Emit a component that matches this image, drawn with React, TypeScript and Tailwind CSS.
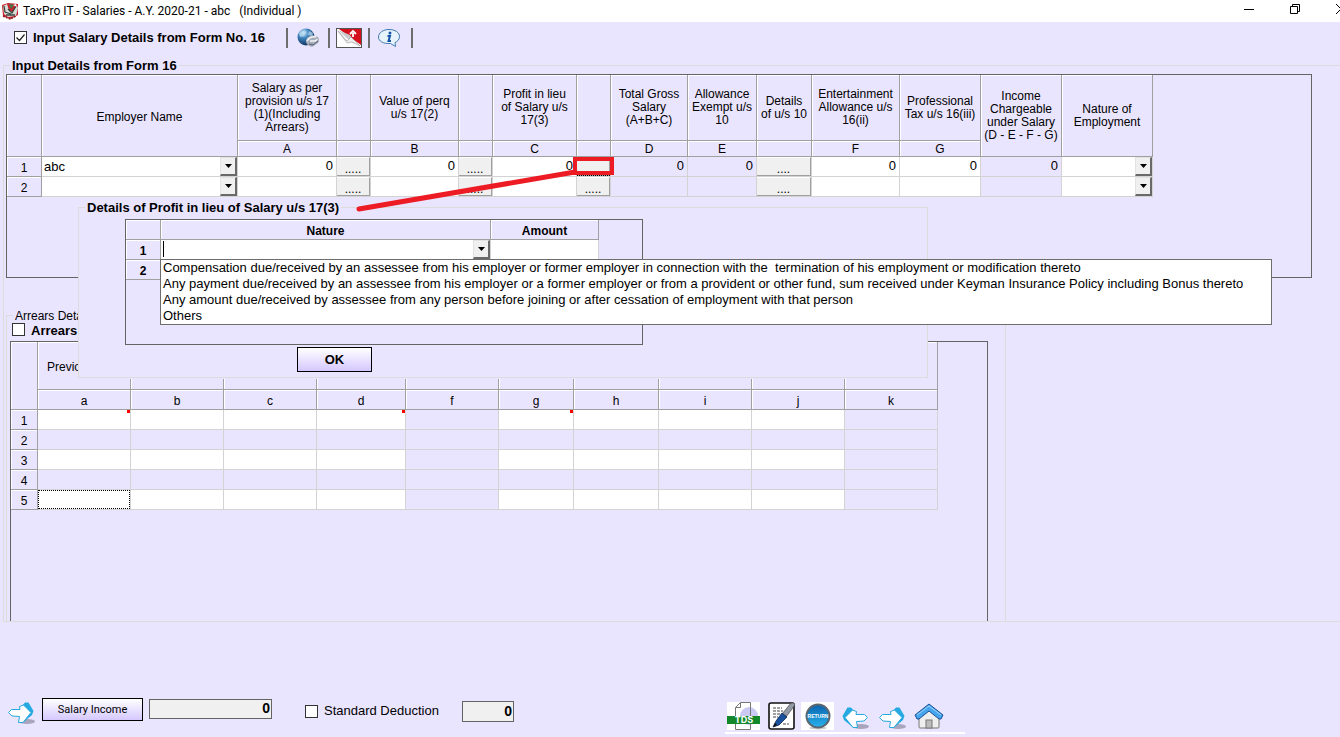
import React from "react";

const SANS = "font-['Liberation_Sans',Arial,sans-serif]";
const UI = "font-['Roboto','Liberation_Sans',sans-serif]";
const WIDE = "font-['Inter','Liberation_Sans',sans-serif]";

const headCell = "relative border-r border-b border-[#a0a0a0] p-0 font-normal text-[12px] leading-[13px] text-center shadow-[inset_1px_1px_0_#fff]";

interface Column {
  width: string;
  title?: string[];
  letter?: string;
  kind: "combo" | "text" | "locked" | "button";
  label: string;
  tall?: boolean;
  first?: string;
}

const salaryColumns: Column[] = [
  { width: "w-[196px]", title: ["Employer Name"], kind: "combo", label: "Employer Name", tall: true, first: "abc" },
  { width: "w-[99px]", title: ["Salary as per", "provision u/s 17", "(1)(Including", "Arrears)"], letter: "A", kind: "text", label: "Salary", first: "0" },
  { width: "w-[34px]", kind: "button", label: "Salary details", first: "....." },
  { width: "w-[88px]", title: ["Value of perq", "u/s 17(2)"], letter: "B", kind: "text", label: "Value of perq", first: "0" },
  { width: "w-[34px]", kind: "button", label: "Perquisite details", first: "....." },
  { width: "w-[84px]", title: ["Profit in lieu", "of Salary u/s", "17(3)"], letter: "C", kind: "text", label: "Profit in lieu", first: "0" },
  { width: "w-[34px]", kind: "button", label: "Profit in lieu details", first: "....." },
  { width: "w-[77px]", title: ["Total Gross", "Salary", "(A+B+C)"], letter: "D", kind: "locked", label: "Total Gross Salary", first: "0" },
  { width: "w-[69px]", title: ["Allowance", "Exempt u/s", "10"], letter: "E", kind: "locked", label: "Allowance Exempt", first: "0" },
  { width: "w-[55px]", title: ["Details", "of u/s 10"], kind: "button", label: "Details of u/s 10", first: "...." },
  { width: "w-[88px]", title: ["Entertainment", "Allowance u/s", "16(ii)"], letter: "F", kind: "text", label: "Entertainment Allowance", first: "0" },
  { width: "w-[81px]", title: ["Professional", "Tax u/s 16(iii)"], letter: "G", kind: "text", label: "Professional Tax", first: "0" },
  { width: "w-[81px]", title: ["Income", "Chargeable", "under Salary", "(D - E - F - G)"], kind: "locked", label: "Income Chargeable", tall: true, first: "0" },
  { width: "w-[91px]", title: ["Nature of", "Employment"], kind: "combo", label: "Nature of Employment", tall: true, first: "" },
];

const arrearColumns = [
  { letter: "a", width: "w-[93px]", marked: true },
  { letter: "b", width: "w-[93px]" },
  { letter: "c", width: "w-[93px]" },
  { letter: "d", width: "w-[89px]", marked: true },
  { letter: "f", width: "w-[93px]", locked: true },
  { letter: "g", width: "w-[75px]", marked: true },
  { letter: "h", width: "w-[85px]" },
  { letter: "i", width: "w-[93px]" },
  { letter: "j", width: "w-[93px]" },
  { letter: "k", width: "w-[93px]", locked: true },
];

const natures = [
  "Compensation due/received by an assessee from his employer or former employer in connection with the \u00a0termination of his employment or modification thereto",
  "Any payment due/received by an assessee from his employer or a former employer or from a provident or other fund, sum received under Keyman Insurance Policy including Bonus thereto",
  "Any amount due/received by assessee from any person before joining or after cessation of employment with that person",
  "Others",
];

function Lines({ text }: { text: string[] }) {
  return (
    <>
      {text.map((t) => (
        <span key={t} className="block whitespace-nowrap">{t}</span>
      ))}
    </>
  );
}

function Combo({ label, value }: { label: string; value?: string }) {
  return (
    <div className="relative h-[19px]">
      <select aria-label={label} className="block h-[19px] w-full appearance-none bg-white pl-[2px] text-[13px] leading-[19px] outline-none">
        <option>{value}</option>
      </select>
      <span className="pointer-events-none absolute top-0 right-0 flex h-[19px] w-[17px] items-center justify-center border-t border-l border-r-2 border-b-2 border-t-[#e3e3e3] border-l-[#e3e3e3] border-r-[#696969] border-b-[#696969] bg-[#f0f0f0]">
        <svg width="7" height="4" viewBox="0 0 7 4"><path d="M0 0h7L3.500 4z" /></svg>
      </span>
    </div>
  );
}

function Tick({ id, checked }: { id: string; checked?: boolean }) {
  return (
    <span className="relative block size-[13px] shrink-0">
      <input id={id} type="checkbox" defaultChecked={checked} className="peer block size-[13px] appearance-none border border-[#333] bg-white" />
      <svg className="pointer-events-none absolute inset-0 hidden peer-checked:block" width="13" height="13" viewBox="0 0 13 13">
        <path d="M2.500 6.500l3 3 5-6" fill="none" stroke="#222" strokeWidth="1.200" />
      </svg>
    </span>
  );
}

function SalaryGrid() {
  return (
    <table className="table-fixed border-separate border-spacing-0 w-[1146px]">
      <colgroup>
        <col className="w-[35px]" />
        {salaryColumns.map((c) => <col key={c.label} className={c.width} />)}
      </colgroup>
      <thead>
        <tr className="h-[66px]">
          <th rowSpan={2} className={headCell} />
          {salaryColumns.map((c) => (
            <th key={c.label} rowSpan={c.tall ? 2 : 1} className={`${headCell} ${c.title?.length === 1 ? "pt-1" : ""}`}>
              {c.title && <Lines text={c.title} />}
            </th>
          ))}
        </tr>
        <tr className="h-[16px]">
          {salaryColumns.filter((c) => !c.tall).map((c) => (
            <th key={c.label} className={`${headCell} pt-[2px]`}>{c.letter}</th>
          ))}
        </tr>
      </thead>
      <tbody>
        {[1, 2].map((n) => (
          <tr key={n} className="h-[20px]">
            <th className={`${headCell} pt-1`}>{n}</th>
            {salaryColumns.map((c) => (
              <td key={c.label} className={`border-r border-b border-[#d3d3d3] p-0 ${c.kind === "locked" ? "" : "bg-white"}`}>
                {c.kind === "combo" && <Combo label={`${c.label} ${n}`} value={n === 1 ? c.first : ""} />}
                {c.kind === "button" && (
                  <button aria-label={`${c.label} ${n}`} className="block h-[19px] w-full border-t border-r border-b border-t-white border-r-[#a0a0a0] border-b-[#a0a0a0] bg-[#f0f0f0] pt-1 text-center text-[12px] leading-[12px]">{c.first}</button>
                )}
                {(c.kind === "text" || c.kind === "locked") && (
                  <input aria-label={`${c.label} ${n}`} readOnly={c.kind === "locked"} defaultValue={n === 1 ? c.first : ""} className="block h-[19px] w-full bg-transparent pr-[3px] pb-[2px] text-right text-[13px] outline-none" />
                )}
              </td>
            ))}
          </tr>
        ))}
      </tbody>
    </table>
  );
}

function ArrearsGrid() {
  return (
    <table className="table-fixed border-separate border-spacing-0 w-[927px]">
      <colgroup>
        <col className="w-[27px]" />
        {arrearColumns.map((c) => <col key={c.letter} className={c.width} />)}
      </colgroup>
      <thead>
        <tr className="h-[48px]">
          <th rowSpan={2} className={headCell} />
          {arrearColumns.map((c, i) => (
            <th key={c.letter} className={`${headCell} pt-1`}>{i === 0 ? "Previous Year" : ""}</th>
          ))}
        </tr>
        <tr className="h-[20px]">
          {arrearColumns.map((c) => (
            <th key={c.letter} className={`${headCell} pt-1`}>{c.letter}</th>
          ))}
        </tr>
      </thead>
      <tbody>
        {[1, 2, 3, 4, 5].map((n) => (
          <tr key={n} className="h-[20px]">
            <th className={`${headCell} pt-1`}>{n}</th>
            {arrearColumns.map((c, i) => (
              <td key={c.letter} className={`relative border-r border-b border-[#d3d3d3] p-0 ${c.locked || n % 2 === 0 ? "" : "bg-white"}`}>
                <input aria-label={`${c.letter} ${n}`} className={`block h-[19px] w-full bg-transparent px-1 text-[13px] outline-none ${n === 5 && i === 0 ? "border border-dotted border-black" : ""}`} />
                {n === 1 && c.marked && <span className="absolute top-0 right-0 size-[3px] bg-[#f00]" />}
              </td>
            ))}
          </tr>
        ))}
      </tbody>
    </table>
  );
}

function ProfitDialog() {
  return (
    <div className="absolute top-[126px] left-[74px] w-[850px] bg-[#eae5ff] pb-px">
      <fieldset className="border border-[#dcdcdc] pb-[5px]">
        <legend className="ml-[6px] h-[16px] px-[2px] text-[13px] leading-[18px] font-bold">Details of Profit in lieu of Salary u/s 17(3)</legend>
        <div className="mt-1 ml-[46px] h-[126px] w-[518px] border border-[#646464]">
          <table className="table-fixed border-separate border-spacing-0 w-[473px]">
            <colgroup>
              <col className="w-[35px]" />
              <col className="w-[330px]" />
              <col className="w-[108px]" />
            </colgroup>
            <thead>
              <tr className="h-[20px] *:pt-1">
                <th className={headCell} />
                <th className={headCell}><b>Nature</b></th>
                <th className={headCell}><b>Amount</b></th>
              </tr>
            </thead>
            <tbody>
              <tr className="h-[20px]">
                <th className={`${headCell} pt-1`}><b>1</b></th>
                <td className="relative border-r border-b border-[#d3d3d3] bg-white p-0">
                  <Combo label="Nature" value="" />
                  <span className="absolute top-px left-[2px] h-[16px] w-px bg-black" />
                  <ul role="listbox" aria-label="Nature" className="absolute top-[19px] -left-px z-10 h-[66px] w-[1112px] border border-[#6d6d6d] bg-white px-[2px] text-[13px] leading-[16px] whitespace-nowrap">
                    {natures.map((t) => <li key={t} role="option">{t}</li>)}
                  </ul>
                </td>
                <td className="border-r border-b border-[#d3d3d3] bg-white p-0">
                  <input aria-label="Amount" className="block h-[19px] w-full px-1 text-right text-[13px] outline-none" />
                </td>
              </tr>
              <tr className="h-[20px]">
                <th className={`${headCell} pt-1`}><b>2</b></th>
              </tr>
            </tbody>
          </table>
        </div>
        <button className="mt-[2px] ml-[218px] block h-[25px] w-[75px] border border-black bg-linear-to-b from-white to-[#d5c8ff] text-[13px] font-bold">OK</button>
      </fieldset>
    </div>
  );
}

function Callout() {
  return (
    <svg className="pointer-events-none absolute top-[82px] left-[349px]" width="264" height="60" viewBox="0 0 264 60" fill="none" stroke="#ed1c24">
      <path d="M6 54L222 17" strokeWidth="5" strokeLinecap="round" />
      <rect x="222" y="4" width="37" height="14" strokeWidth="4" />
      <path d="M224 20.500h34" stroke="#000" strokeDasharray="1 1" />
    </svg>
  );
}

function ArrowIcon({ back }: { back?: boolean }) {
  return (
    <svg width="27" height="24" viewBox="0 0 27 24">
      <ellipse cx="19" cy="20.500" rx="8" ry="2.500" fill="#a9a5bd" />
      <g transform={back ? "translate(26 0) scale(-1 1)" : undefined}>
        <path d="M12 7L17 1.500H20.500L25.500 10L24 14L15 21.500H12Z" fill="#25a9e0" />
        <path d="M.5 11.500L3.500 8.500L12 8.500L11.500 5.500L15.500 4L23 11.500L15 21.500H10.500L11.500 15.500L4 15Z" fill="#fff" stroke="#25a9e0" strokeLinejoin="round" />
      </g>
    </svg>
  );
}

function AppIcon() {
  return (
    <svg width="18" height="18" viewBox="0 0 18 18">
      <path d="M1 3l6-2 10 1v11l-7 4-8-3z" fill="#c8202c" />
      <path d="M2 4l4-2 2 6 3 2 5-6 1 2-2 8-8 1-4-3z" fill="#d9dcd8" />
      <path d="M3 4l1 6 6 2M15 4l-4 7-4-4M5 13h9" stroke="#36443d" strokeWidth="1.300" fill="none" />
      <path d="M8 2l5 1-3 4z" fill="#3f7c4c" />
      <path d="M12 3l3-1 1 3z" fill="#fff" />
      <path d="M2 14l7 3 6-3" stroke="#8b1822" strokeWidth="1.500" strokeDasharray="2 1" fill="none" />
    </svg>
  );
}

function GlobeIcon() {
  return (
    <svg width="28" height="20" viewBox="-2 0 28 20">
      <defs>
        <radialGradient id="globe" cx=".35" cy=".25" r=".8">
          <stop offset="0" stopColor="#d8efff" />
          <stop offset=".4" stopColor="#3d83bd" />
          <stop offset="1" stopColor="#0d2c57" />
        </radialGradient>
      </defs>
      <circle cx="10" cy="9" r="8.500" fill="url(#globe)" />
      <path d="M3 5l4-2 3 1-2 4-4 1zM13 3l4 2-1 3-4-1z" fill="#b9dcf0" opacity=".7" />
      <path d="M10 13q0-4 6-6l6 2q2 3 0 6l-6 4q-5-1-6-5z" fill="#a6adba" />
      <path d="M11 13q3-5 9-4M14 13h5q2-1 2-2" stroke="#f2f4f8" strokeWidth="1.500" fill="none" />
      <path d="M13 16l4 1 5-4" stroke="#525c70" fill="none" />
    </svg>
  );
}

function PageIcon() {
  return (
    <svg width="26" height="20" viewBox="0 0 26 20">
      <rect x=".5" y=".5" width="25" height="19" fill="#fff" stroke="#555" />
      <path d="M3 1h22v16z" fill="#d3101c" />
      <path d="M2 2l12 5 5 9-6-4z" fill="#c9c9c9" />
      <path d="M2 3l9 10 4-4 9 9-8-4-5 1z" fill="#eee" stroke="#999" strokeWidth=".6" />
      <path d="M17 9V5M14 6l3-3 3 3" stroke="#fff" strokeWidth="1.800" fill="none" />
    </svg>
  );
}

function InfoIcon() {
  return (
    <svg width="29" height="18" viewBox="-1 0 29 18">
      <path d="M12 .5c6 0 10.500 3 10.500 7 0 3-2 5-4.500 6l.5 4-5-3C6 15 1.500 12 1.500 8S6 .5 12 .5z" fill="#e7f4fc" stroke="#3f78ad" />
      <circle cx="13" cy="4" r="1.500" fill="#1553a5" />
      <path d="M10.500 7h2.500l-1.500 5H14" stroke="#1553a5" strokeWidth="2" fill="none" />
    </svg>
  );
}

function TdsIcon() {
  return (
    <svg width="33" height="28" viewBox="0 0 33 28">
      <path d="M0 0h33v28H0z" fill="#fff" />
      <circle cx="22" cy="14" r="9" fill="#c9c9f3" />
      <path d="M8.500 27.500V5.500l5-5h10v27zM8.500 5.500h5v-5" fill="none" stroke="#777" />
      <path d="M0 14h33v8H0z" fill="#12882a" />
      <text x="17" y="21" textAnchor="middle" fontSize="9" fontWeight="bold" fill="#fff" className={WIDE}>TDS</text>
    </svg>
  );
}

function NoteIcon() {
  return (
    <svg width="27" height="28" viewBox="0 0 27 28">
      <rect x="1" y="1" width="25" height="26" rx="2" fill="#fff" stroke="#111" strokeWidth="1.600" />
      <path d="M5 6h9M5 9h10M5 12h7M5 15h5M15 22h6" stroke="#444" strokeDasharray="3 1" />
      <path d="M26 1l-3 0-9 11 4 3 9-12z" fill="#939aa6" stroke="#333" strokeWidth=".6" />
      <path d="M14 11l5 4-8 8-6 2 3-6z" fill="#19529c" stroke="#0b2550" strokeWidth=".8" />
      <path d="M5 25l2-4 2 2z" fill="#111" />
    </svg>
  );
}

function ReturnIcon() {
  return (
    <svg width="33" height="28" viewBox="0 0 33 28">
      <defs>
        <linearGradient id="ret" x2="0" y2="1">
          <stop offset="0" stopColor="#0a63ad" />
          <stop offset="1" stopColor="#29b3ee" />
        </linearGradient>
      </defs>
      <path d="M0 0h33v28H0z" fill="#fff" />
      <ellipse cx="17" cy="26" rx="9" ry="1.500" fill="#ccc" />
      <circle cx="17" cy="14" r="11.500" fill="url(#ret)" stroke="#5c6670" strokeWidth="2" />
      <text x="17" y="16" textAnchor="middle" fontSize="5" fontWeight="bold" fill="#fff" className={SANS}>RETURN</text>
    </svg>
  );
}

function HomeIcon() {
  return (
    <svg width="30" height="26" viewBox="0 0 30 26">
      <path d="M5 13l10-9 10 9v11q0 1-1 1H6q-1 0-1-1z" fill="#eee" stroke="#777" />
      <rect x="12" y="17" width="6" height="8" fill="#bbb" stroke="#777" />
      <path d="M15 1l14 11-2 4-2 0-10-8-10 8-2 0-2-4z" fill="#45a5ee" stroke="#1b4f91" strokeLinejoin="round" />
      <path d="M3 12l12-9 12 9" stroke="#9cd4fb" fill="none" />
    </svg>
  );
}

function Divider() {
  return <span className="h-[20px] w-[2px] bg-[#6d6d6d]" />;
}

function App() {
  return (
    <div className={`min-h-screen w-full overflow-hidden bg-[#eae5ff] text-[13px] text-black ${SANS}`}>
      <header className="flex h-[22px] items-center justify-between bg-white pl-px">
        <div className="flex items-center gap-1">
          <AppIcon />
          <h1 className={`text-[12px] whitespace-pre ${UI}`}>{"TaxPro IT - Salaries - A.Y. 2020-21 - abc   (Individual )"}</h1>
        </div>
        <div className="-mr-[6px] flex items-center gap-9 pb-1">
          <button aria-label="Minimize"><svg width="10" height="10" viewBox="0 0 10 10"><path d="M0 5.500h10" stroke="#000" /></svg></button>
          <button aria-label="Restore"><svg width="10" height="10" viewBox="0 0 10 10" fill="none" stroke="#000"><path d="M.5 2.500h7v7h-7zM2.500 2.500v-2h7v7h-2" /></svg></button>
          <button aria-label="Close"><svg width="10" height="10" viewBox="0 0 10 10"><path d="M0 0l10 10M10 0L0 10" stroke="#000" /></svg></button>
        </div>
      </header>

      <div className="flex h-[35px] items-center pl-[14px] pb-1">
        <Tick id="form16" checked />
        <label htmlFor="form16" className="ml-[6px] w-[253px] text-[13px] font-bold whitespace-nowrap">Input Salary Details from Form No. 16</label>
        <div className="flex items-center gap-[6px]">
          <Divider />
          <button aria-label="Web"><GlobeIcon /></button>
          <Divider />
          <button aria-label="Import page"><PageIcon /></button>
          <Divider />
          <button aria-label="Information"><InfoIcon /></button>
          <Divider />
        </div>
      </div>

      <fieldset className="ml-[3px] border-y border-l border-[#dcdcdc]">
        <legend className="ml-[6px] h-[16px] px-[2px] text-[13px] leading-[18px] font-bold">Input Details from Form 16</legend>
        <div className="relative pt-px pl-[2px]">
          <div className="mr-7 h-[204px] border border-[#646464]">
            <SalaryGrid />
          </div>

          <fieldset className="mt-[29px] -mb-px w-[1000px] border border-[#dcdcdc]">
            <legend className="ml-[6px] h-[16px] px-[2px] text-[12px] leading-[18px]">Arrears Details</legend>
            <div className="flex h-[18px] items-start gap-[6px] pl-[5px]">
              <Tick id="arrears" />
              <label htmlFor="arrears" className="font-bold leading-[16px]">Arrears</label>
            </div>
            <div className="mr-[17px] ml-[3px] h-[280px] border-x border-t border-[#646464]">
              <ArrearsGrid />
            </div>
          </fieldset>

          <ProfitDialog />
          <Callout />
        </div>
      </fieldset>

      <footer className="flex items-start pt-[76px]">
        <div className="flex h-[26px] w-[54%] items-center pl-2">
          <button aria-label="Go" className="pt-1"><ArrowIcon /></button>
          <div className="flex items-center gap-[6px] pb-1 pl-[7px]">
            <button className="h-[23px] w-[101px] border border-black bg-linear-to-b from-white to-[#d5c8ff] pt-px text-[11px]"><span className={UI}>Salary Income</span></button>
            <input aria-label="Salary Income" readOnly defaultValue="0" className="h-[20px] w-[123px] border border-[#646464] bg-[#f0f0f0] pr-px pb-[2px] text-right text-[14px] font-bold" />
          </div>
          <div className="flex items-center gap-[6px] pl-[33px]">
            <Tick id="standard" />
            <label htmlFor="standard" className="w-[132px] text-[13px]">Standard Deduction</label>
            <input aria-label="Standard Deduction amount" readOnly defaultValue="0" className="h-[21px] w-[52px] border border-[#646464] bg-[#f0f0f0] pr-px text-right text-[14px] font-bold" />
          </div>
        </div>
        <nav aria-label="Tools" className="mt-1 ml-px flex w-[240px] items-center border-b-2 border-white pb-[2px] pl-[2px]">
          <button aria-label="TDS"><TdsIcon /></button>
          <button aria-label="Notes" className="ml-2"><NoteIcon /></button>
          <button aria-label="Return" className="ml-[6px]"><ReturnIcon /></button>
          <button aria-label="Previous" className="ml-2 pt-1"><ArrowIcon back /></button>
          <button aria-label="Next" className="ml-[10px] pt-1"><ArrowIcon /></button>
          <button aria-label="Home" className="ml-[8px]"><HomeIcon /></button>
        </nav>
      </footer>
    </div>
  );
}

export default App;
